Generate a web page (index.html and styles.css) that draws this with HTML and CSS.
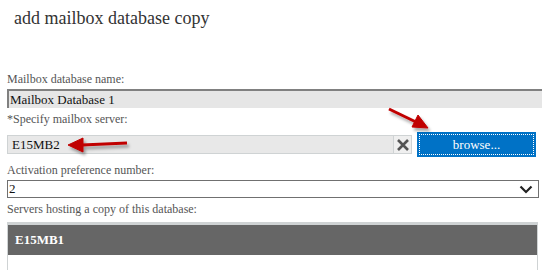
FILE: index.html
```html
<!DOCTYPE html>
<html lang="en">
<head>
  <meta charset="UTF-8">
  <title>add mailbox database copy</title>
  <link rel="stylesheet" href="styles.css">
</head>
<body>

  <div class="dialog">
    <h1 class="title">add mailbox database copy</h1>

    <form class="form">
      <label class="label label-first">Mailbox database name:</label>
      <div class="readonly">Mailbox Database 1</div>

      <label class="label">*Specify mailbox server:</label>
      <div class="server-row">
        <div class="server-input">
          <span class="server-value">E15MB2</span>
          <span class="clear">
            <svg width="14" height="14" viewBox="0 0 14 14">
              <path d="M2 2 L12 12 M12 2 L2 12" stroke="#555" stroke-width="2.6"/>
            </svg>
          </span>
        </div>
        <button type="button" class="browse"><span class="browse-inner">browse...</span></button>
      </div>

      <label class="label label-gap">Activation preference number:</label>
      <div class="select">
        <span>2</span>
        <svg width="14" height="9" viewBox="0 0 14 9">
          <path d="M1.5 1.5 L7 7 L12.5 1.5" fill="none" stroke="#222" stroke-width="2.2"/>
        </svg>
      </div>

      <label class="label">Servers hosting a copy of this database:</label>
      <div class="list">
        <div class="list-item">E15MB1</div>
      </div>
    </form>
  </div>

  <!-- annotation arrows -->
  <svg class="arrows" width="548" height="271" viewBox="0 0 548 271">
    <defs>
      <filter id="shadow" x="-20%" y="-50%" width="150%" height="220%">
        <feDropShadow dx="2" dy="3" stdDeviation="1.5" flood-color="#000" flood-opacity="0.35"/>
      </filter>
    </defs>
    <g filter="url(#shadow)" fill="#c00000" stroke="#c00000">
      <line x1="389" y1="109" x2="416" y2="122" stroke-width="3"/>
      <polygon points="428,128 412,127 418,115" stroke-width="1"/>
      <line x1="127" y1="143" x2="82" y2="145" stroke-width="3"/>
      <polygon points="68,145 83,138 83,152" stroke-width="1"/>
    </g>
  </svg>

</body>
</html>
```

FILE: styles.css
```css
body {
  margin: 0;
  font-family: "Liberation Serif", serif;
  background: #fff;
  width: 548px;
  height: 271px;
  overflow: hidden;
}

.dialog {
  padding: 0 0 0 7px;
}

.title {
  margin: 0;
  padding: 8px 0 0 7px;
  font-size: 18px;
  font-weight: normal;
  line-height: 20px;
  color: #333;
}

.form {
  display: flex;
  flex-direction: column;
}

.label {
  display: block;
  font-size: 12px;
  line-height: 16px;
  color: #555;
  margin-top: 3px;
  margin-bottom: 2px;
}

.label-first {
  margin-top: 43px;
}

.label-gap {
  margin-top: 5px;
}

.readonly {
  width: 532px;
  height: 17px;
  background: #e6e6e6;
  border-top: 2px solid #808080;
  border-left: 2px solid #808080;
  font-size: 13px;
  line-height: 17px;
  color: #111;
  padding-left: 1px;
}

.server-row {
  display: flex;
  align-items: center;
  height: 25px;
  margin-top: 3px;
}

.server-input {
  width: 403px;
  height: 17px;
  display: flex;
  align-items: center;
  justify-content: space-between;
  background: #e8e8e8;
  border: 1px solid #cfd3d4;
}

.server-value {
  font-size: 13px;
  color: #111;
  padding-left: 4px;
}

.clear {
  width: 17px;
  height: 17px;
  display: flex;
  align-items: center;
  justify-content: center;
  background: #efefef;
  border-left: 1px solid #cfd3d4;
}

.browse {
  margin-left: 5px;
  width: 119px;
  height: 25px;
  padding: 2px;
  background: #0072c6;
  border: none;
  cursor: pointer;
}

.browse-inner {
  display: block;
  height: 19px;
  line-height: 19px;
  border: 1px dotted #fff;
  color: #fff;
  font-family: "Liberation Serif", serif;
  font-size: 13px;
}

.select {
  width: 524px;
  height: 16px;
  display: flex;
  align-items: center;
  justify-content: space-between;
  border: 1px solid #707070;
  padding: 0 5px 0 1px;
  font-size: 13px;
  color: #111;
}

.list {
  margin-top: 3px;
  width: 529px;
  height: 45px;
  border: 1px solid #cfd3d4;
  border-top: 3px solid #cfd3d4;
  border-bottom: none;
}

.list-item {
  height: 30px;
  line-height: 30px;
  background: #666;
  color: #fff;
  font-weight: bold;
  font-size: 13px;
  padding-left: 7px;
}

.arrows {
  position: absolute;
  left: 0;
  top: 0;
  pointer-events: none;
}
```
